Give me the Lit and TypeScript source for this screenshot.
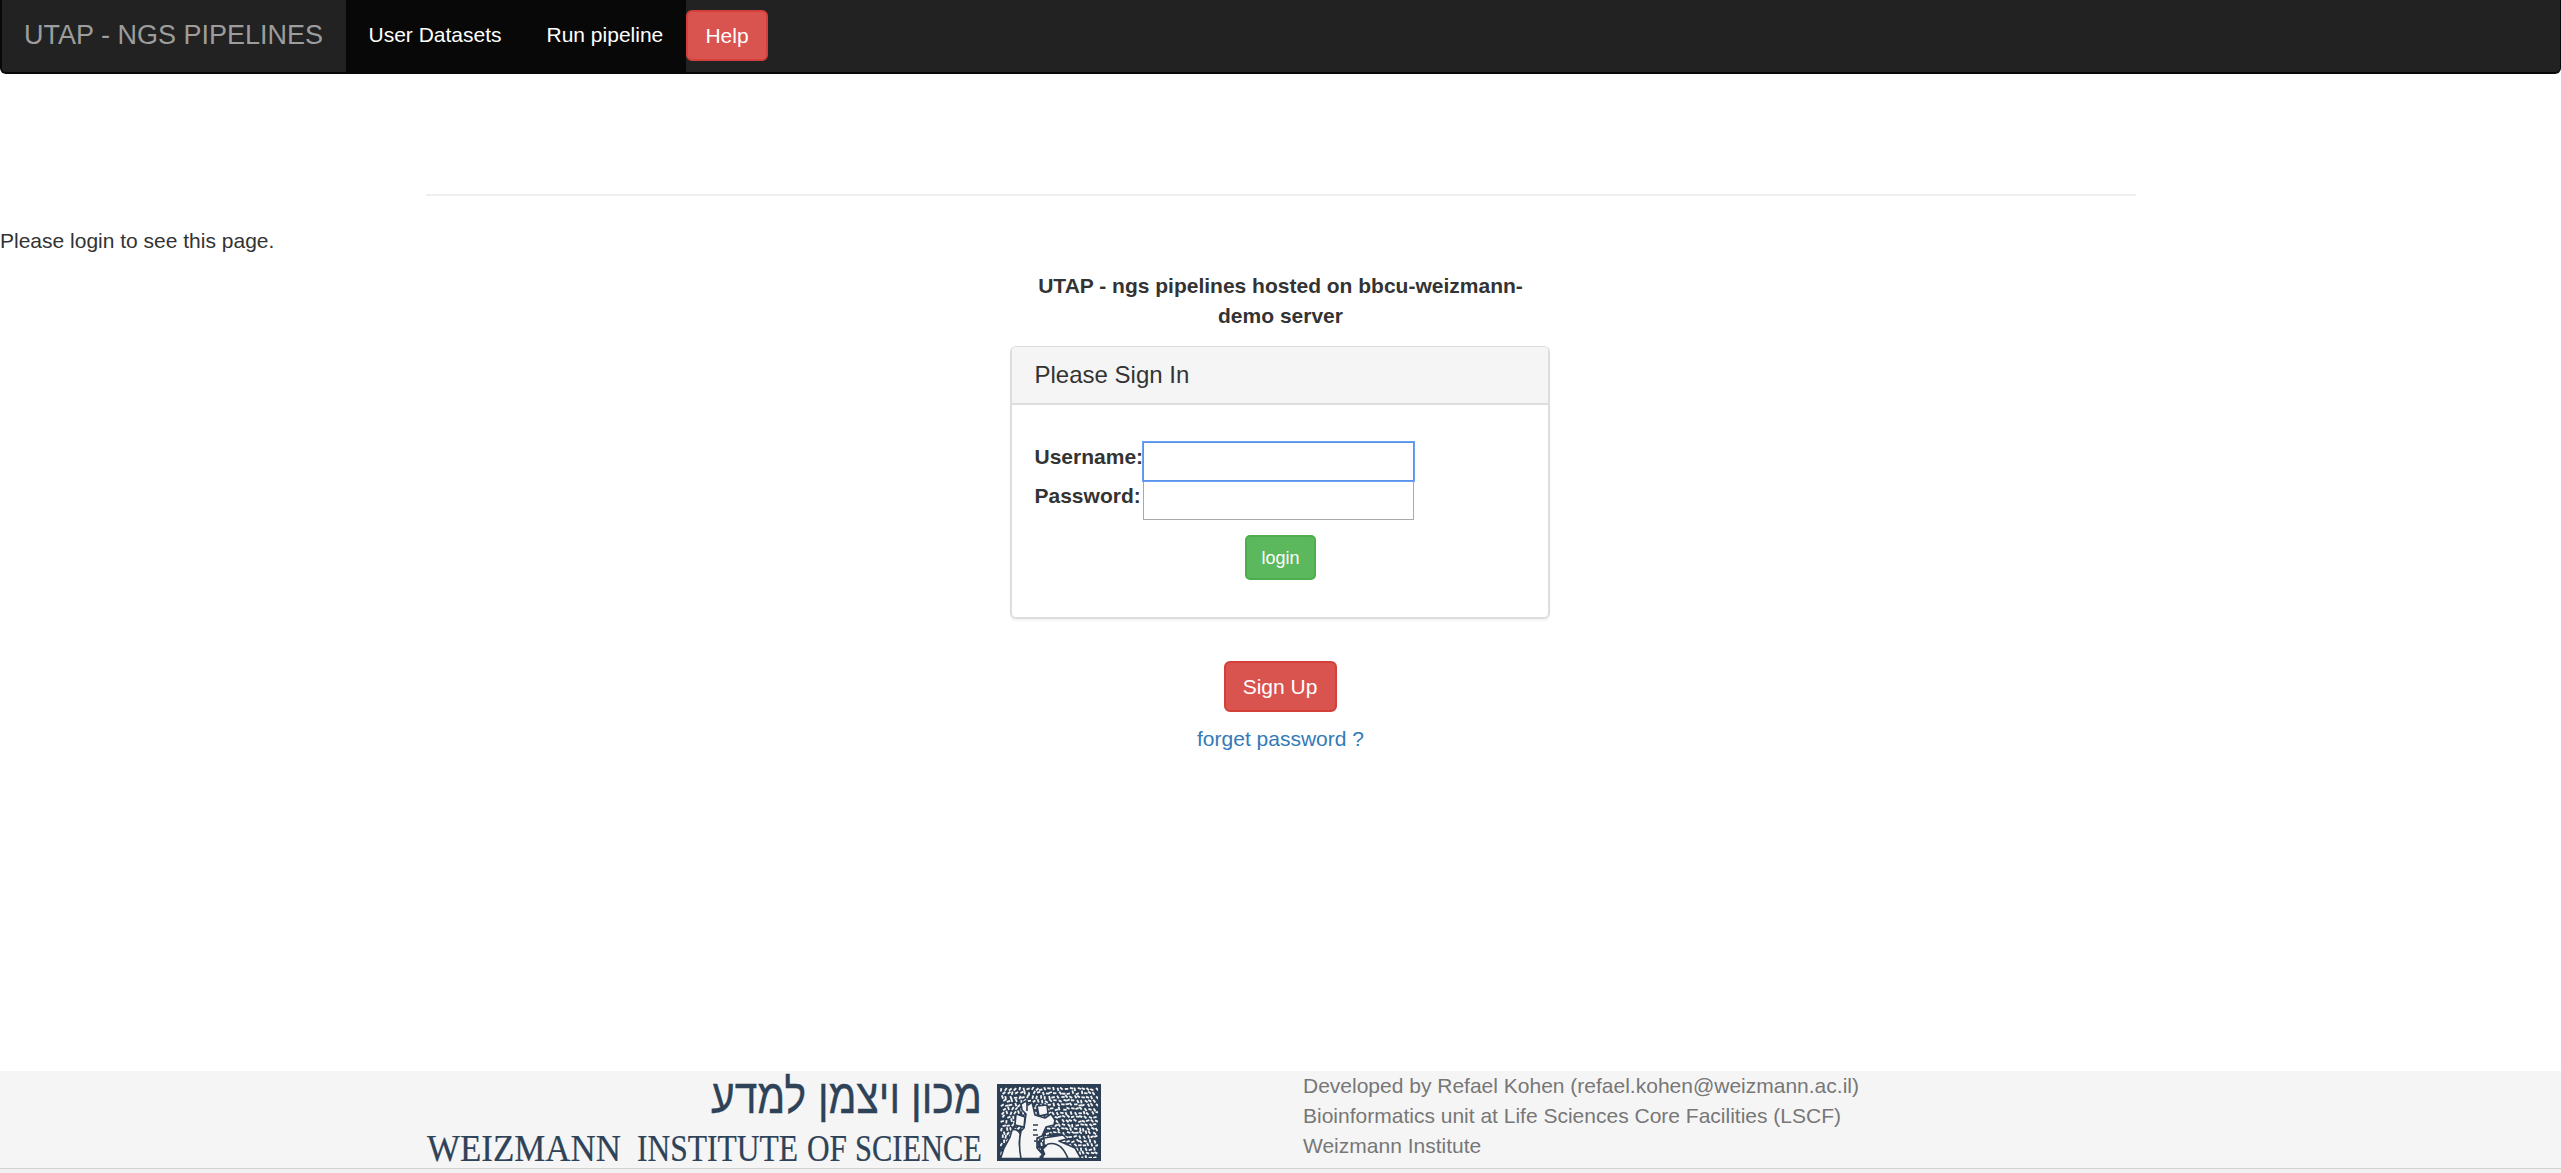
import { LitElement, html, svg, css } from "lit";
import { customElement } from "lit/decorators.js";

function flecks() {
  const out = [];
  let seed = 7;
  const rnd = () => { seed = (seed * 16807) % 2147483647; return seed / 2147483647; };
  let row = 0;
  for (let y = 5; y < 74; y += 4) {
    row++;
    for (let x = row % 2 ? 5 : 7; x < 101; x += 4.3) {
      const px = x + rnd() * 1.8 - 0.9;
      const py = y + rnd() * 1.8 - 0.9;
      const lean = x < 45 ? -70 : 20;
      const a = lean + rnd() * 110 - 45;
      out.push(svg`<path d="M${(px - 1.7).toFixed(1)} ${py.toFixed(1)}h3.4" transform="rotate(${a.toFixed(0)} ${px.toFixed(1)} ${py.toFixed(1)})"/>`);
    }
  }
  return out;
}

@customElement("institute-logo")
export class InstituteLogo extends LitElement {
  static styles = css`
    :host { display: block; width: 676px; height: 97px; }
    svg { display: block; overflow: visible; }
    .latin { font: 31.5px "Liberation Serif", serif; fill: #2f4358; stroke: #2f4358; stroke-width: .2px; }
    .hebrew { font: 42px "Liberation Sans", "DejaVu Sans", sans-serif; fill: #2f4358; stroke: #2f4358; stroke-width: .3px; direction: rtl; }
  `;
  render() {
    return html`<svg width="676" height="97" viewBox="0 0 676 97">
      <g class="hebrew" transform="translate(0 42) scale(1 1.14)">
        <text x="555" y="0" textLength="71" lengthAdjust="spacingAndGlyphs">מכון</text>
        <text x="473" y="0" textLength="82" lengthAdjust="spacingAndGlyphs">ויצמן</text>
        <text x="379" y="0" textLength="95" lengthAdjust="spacingAndGlyphs">למדע</text>
      </g>
      <g class="latin" transform="translate(0 89.5) scale(1 1.21)">
        <text x="0" y="0" textLength="194" lengthAdjust="spacingAndGlyphs">WEIZMANN</text>
        <text x="210" y="0" textLength="161" lengthAdjust="spacingAndGlyphs">INSTITUTE</text>
        <text x="380" y="0" textLength="40" lengthAdjust="spacingAndGlyphs">OF</text>
        <text x="428" y="0" textLength="127" lengthAdjust="spacingAndGlyphs">SCIENCE</text>
      </g>
      <g transform="translate(570 13)">
        <rect width="104" height="77" fill="#2c3e54"/>
        <g stroke="#f5f5f5" stroke-width="1.8">${flecks()}</g>
        <g fill="#f5f5f5" stroke="#2c3e54" stroke-width="1.6" stroke-linejoin="round">
          <path d="M3.5 74.5L7 64L13 53L15 46Q20 44 23.500 50Q21 60 24 68V74.500Z"/>
          <path d="M47 54L66 51L70 55L62 57L78 64L84 74.500H60L47 66Z"/>
          <path d="M24 74.500Q21 60 24 47L27 44L29 30L25 26L24 20L29 17L31.500 21L35 18L38 31L48 34L54 30L58 36L57 41L49 43L45 52L40 54V64L47 72V74.500Z"/>
          <path d="M19 30L28 33L27 43L18 41Z"/>
          <path d="M40 22L50 21L51 30L42 32Z"/>
          <path d="M46 74.500L45 65L51 60Q64 57 71 74.500Z"/>
          <path d="M30 17V27M36 41H41M36 46H40M36 51H41M37 57H40M53 47L60 45M52 50H64" fill="none"/>
        </g>
        <path d="M43 74L47 70L45 65L49 61" fill="none" stroke="#2c3e54" stroke-width="2.500"/>
        <rect x="1.500" y="1.500" width="101" height="74" fill="none" stroke="#2c3e54" stroke-width="3"/>
      </g>
    </svg>`;
  }
}

@customElement("app-root")
export class AppRoot extends LitElement {
  static styles = css`
    :host { display: flex; flex-direction: column; height: 1173px; overflow: hidden; background: #fff; color: #333; font: 21px/30px "Liberation Sans", Arial, sans-serif; }
    * { box-sizing: border-box; }
    a { text-decoration: none; }
    .navbar { display: flex; height: 74px; flex: none; background: #222; border: solid #080808; border-width: 0 1px 2px 2px; border-radius: 0 0 6px 6px; }
    .brand { width: 344px; padding: 20px 0 0 22px; font-size: 27px; color: #9d9d9d; white-space: nowrap; }
    .tab { background: #080808; color: #fff; padding: 20px 0 0 22.5px; white-space: nowrap; }
    .tab.datasets { width: 178px; }
    .tab.run { width: 162px; }
    .btn { display: flex; align-items: center; justify-content: center; border: 2px solid #d43f3a; border-radius: 6px; background: #d9534f; color: #fff; font: inherit; padding: 0; }
    .help { width: 82px; height: 51px; margin-top: 10px; }
    .rule { width: 1710px; height: 2px; flex: none; margin: 120px 0 0 426px; background: #eee; }
    .notice { margin: 30px 0 0; }
    .login { width: 540px; margin: 15px 0 0 1010px; display: flex; flex-direction: column; align-items: center; }
    .heading { width: 510px; padding-left: 1px; text-align: center; font-weight: bold; }
    .panel { width: 540px; height: 273px; margin-top: 15px; border: 2px solid #ddd; border-top-width: 1px; border-radius: 6px; box-shadow: 0 2px 2px rgba(0,0,0,.05); }
    .panel-head { height: 58px; padding: 13px 0 0 22.5px; background: #f5f5f5; border-bottom: 2px solid #ddd; border-radius: 4px 4px 0 0; font-size: 24px; }
    .form { padding: 37px 0 0 22.5px; display: flex; flex-direction: column; }
    .row { display: flex; height: 39px; }
    .row label { width: 108.5px; flex: none; font-weight: bold; white-space: nowrap; }
    .row input { width: 271px; height: 39px; padding: 0; margin: 0; border: 1px solid #a9a9a9; background: #fff; outline: none; }
    .row input.active { border-color: #5b93e8; box-shadow: 0 0 0 1px #6aa0f5; position: relative; }
    .submit { width: 71px; height: 45px; margin: 15px 0 0 210.5px; font-size: 18px; background: #5cb85c; border-color: #4cae4c; border-radius: 5px; }
    .signup { width: 113px; height: 51px; margin-top: 42px; }
    .forgot { margin-top: 12px; padding-left: 1px; color: #337ab7; }
    .footer { display: flex; flex: none; height: 98px; margin-top: auto; background: #f5f5f5; border-bottom: 1px solid #d3d3d3; padding-left: 427px; color: #777; }
    .credits { margin-left: 200px; white-space: nowrap; }
    .strip { height: 4px; flex: none; background: #f1f1f1; }
  `;
  render() {
    return html`
      <nav class="navbar">
        <a class="brand">UTAP - NGS PIPELINES</a>
        <a class="tab datasets">User Datasets</a>
        <a class="tab run">Run pipeline</a>
        <button class="btn help">Help</button>
      </nav>
      <div class="rule"></div>
      <p class="notice">Please login to see this page.</p>
      <main class="login">
        <div class="heading">UTAP - ngs pipelines hosted on bbcu-weizmann-demo server</div>
        <section class="panel">
          <div class="panel-head">Please Sign In</div>
          <div class="form">
            <div class="row"><label>Username:</label><input class="active" type="text"></div>
            <div class="row"><label>Password:</label><input type="password"></div>
            <button class="btn submit">login</button>
          </div>
        </section>
        <button class="btn signup">Sign Up</button>
        <a class="forgot">forget password ?</a>
      </main>
      <footer class="footer">
        <institute-logo></institute-logo>
        <div class="credits">Developed by Refael Kohen (refael.kohen@weizmann.ac.il)<br>Bioinformatics unit at Life Sciences Core Facilities (LSCF)<br>Weizmann Institute</div>
      </footer>
      <div class="strip"></div>`;
  }
}
